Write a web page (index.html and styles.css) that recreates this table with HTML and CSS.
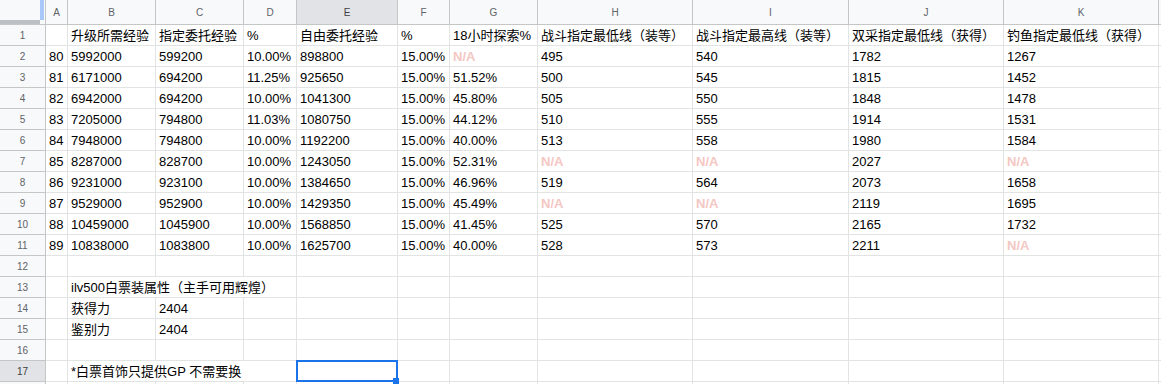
FILE: index.html
```html
<!DOCTYPE html>
<html lang="zh-CN">
<head>
<meta charset="utf-8">
<title>Sheet</title>
<link rel="stylesheet" href="styles.css">
</head>
<body>
<div class="sheet">
  <div class="row head">
    <div class="corner"><div class="corner-top"><span class="freeze-col"></span></div><div class="freeze-row"></div></div>
    <div class="ch">A</div><div class="ch">B</div><div class="ch">C</div><div class="ch">D</div><div class="ch active">E</div><div class="ch">F</div><div class="ch">G</div><div class="ch">H</div><div class="ch">I</div><div class="ch">J</div><div class="ch">K</div><div class="ch filler"></div>
  </div>
  <div class="row"><div class="rh">1</div><div class="c"></div><div class="c">升级所需经验</div><div class="c">指定委托经验</div><div class="c">%</div><div class="c">自由委托经验</div><div class="c">%</div><div class="c">18小时探索%</div><div class="c">战斗指定最低线（装等）</div><div class="c">战斗指定最高线（装等）</div><div class="c">双采指定最低线（获得）</div><div class="c">钓鱼指定最低线（获得）</div><div class="c"></div></div>
  <div class="row"><div class="rh">2</div><div class="c">80</div><div class="c">5992000</div><div class="c">599200</div><div class="c">10.00%</div><div class="c">898800</div><div class="c">15.00%</div><div class="c na">N/A</div><div class="c">495</div><div class="c">540</div><div class="c">1782</div><div class="c">1267</div><div class="c"></div></div>
  <div class="row"><div class="rh">3</div><div class="c">81</div><div class="c">6171000</div><div class="c">694200</div><div class="c">11.25%</div><div class="c">925650</div><div class="c">15.00%</div><div class="c">51.52%</div><div class="c">500</div><div class="c">545</div><div class="c">1815</div><div class="c">1452</div><div class="c"></div></div>
  <div class="row"><div class="rh">4</div><div class="c">82</div><div class="c">6942000</div><div class="c">694200</div><div class="c">10.00%</div><div class="c">1041300</div><div class="c">15.00%</div><div class="c">45.80%</div><div class="c">505</div><div class="c">550</div><div class="c">1848</div><div class="c">1478</div><div class="c"></div></div>
  <div class="row"><div class="rh">5</div><div class="c">83</div><div class="c">7205000</div><div class="c">794800</div><div class="c">11.03%</div><div class="c">1080750</div><div class="c">15.00%</div><div class="c">44.12%</div><div class="c">510</div><div class="c">555</div><div class="c">1914</div><div class="c">1531</div><div class="c"></div></div>
  <div class="row"><div class="rh">6</div><div class="c">84</div><div class="c">7948000</div><div class="c">794800</div><div class="c">10.00%</div><div class="c">1192200</div><div class="c">15.00%</div><div class="c">40.00%</div><div class="c">513</div><div class="c">558</div><div class="c">1980</div><div class="c">1584</div><div class="c"></div></div>
  <div class="row"><div class="rh">7</div><div class="c">85</div><div class="c">8287000</div><div class="c">828700</div><div class="c">10.00%</div><div class="c">1243050</div><div class="c">15.00%</div><div class="c">52.31%</div><div class="c na">N/A</div><div class="c na">N/A</div><div class="c">2027</div><div class="c na">N/A</div><div class="c"></div></div>
  <div class="row"><div class="rh">8</div><div class="c">86</div><div class="c">9231000</div><div class="c">923100</div><div class="c">10.00%</div><div class="c">1384650</div><div class="c">15.00%</div><div class="c">46.96%</div><div class="c">519</div><div class="c">564</div><div class="c">2073</div><div class="c">1658</div><div class="c"></div></div>
  <div class="row"><div class="rh">9</div><div class="c">87</div><div class="c">9529000</div><div class="c">952900</div><div class="c">10.00%</div><div class="c">1429350</div><div class="c">15.00%</div><div class="c">45.49%</div><div class="c na">N/A</div><div class="c na">N/A</div><div class="c">2119</div><div class="c">1695</div><div class="c"></div></div>
  <div class="row"><div class="rh">10</div><div class="c">88</div><div class="c">10459000</div><div class="c">1045900</div><div class="c">10.00%</div><div class="c">1568850</div><div class="c">15.00%</div><div class="c">41.45%</div><div class="c">525</div><div class="c">570</div><div class="c">2165</div><div class="c">1732</div><div class="c"></div></div>
  <div class="row"><div class="rh">11</div><div class="c">89</div><div class="c">10838000</div><div class="c">1083800</div><div class="c">10.00%</div><div class="c">1625700</div><div class="c">15.00%</div><div class="c">40.00%</div><div class="c">528</div><div class="c">573</div><div class="c">2211</div><div class="c na">N/A</div><div class="c"></div></div>
  <div class="row"><div class="rh">12</div><div class="c"></div><div class="c"></div><div class="c"></div><div class="c"></div><div class="c"></div><div class="c"></div><div class="c"></div><div class="c"></div><div class="c"></div><div class="c"></div><div class="c"></div><div class="c"></div></div>
  <div class="row"><div class="rh">13</div><div class="c"></div><div class="c span3">ilv500白票装属性（主手可用辉煌）</div><div class="c"></div><div class="c"></div><div class="c"></div><div class="c"></div><div class="c"></div><div class="c"></div><div class="c"></div><div class="c"></div></div>
  <div class="row"><div class="rh">14</div><div class="c"></div><div class="c">获得力</div><div class="c">2404</div><div class="c"></div><div class="c"></div><div class="c"></div><div class="c"></div><div class="c"></div><div class="c"></div><div class="c"></div><div class="c"></div><div class="c"></div></div>
  <div class="row"><div class="rh">15</div><div class="c"></div><div class="c">鉴别力</div><div class="c">2404</div><div class="c"></div><div class="c"></div><div class="c"></div><div class="c"></div><div class="c"></div><div class="c"></div><div class="c"></div><div class="c"></div><div class="c"></div></div>
  <div class="row"><div class="rh">16</div><div class="c"></div><div class="c"></div><div class="c"></div><div class="c"></div><div class="c"></div><div class="c"></div><div class="c"></div><div class="c"></div><div class="c"></div><div class="c"></div><div class="c"></div><div class="c"></div></div>
  <div class="row"><div class="rh active">17</div><div class="c"></div><div class="c span3">*白票首饰只提供GP 不需要换</div><div class="c sel"><span class="handle"></span></div><div class="c"></div><div class="c"></div><div class="c"></div><div class="c"></div><div class="c"></div><div class="c"></div><div class="c"></div></div>
  <div class="row"><div class="rh"></div><div class="c"></div><div class="c"></div><div class="c"></div><div class="c"></div><div class="c"></div><div class="c"></div><div class="c"></div><div class="c"></div><div class="c"></div><div class="c"></div><div class="c"></div><div class="c"></div></div>
</div>
</body>
</html>
```
FILE: styles.css
```css
html, body {
  margin: 0;
  padding: 0;
  background: #fff;
}
.sheet {
  width: 1161px;
  height: 384px;
  overflow: hidden;
  font-family: "Liberation Sans", "Noto Sans CJK SC", Arial, sans-serif;
  font-size: 13px;
  color: #000;
}
.row {
  display: grid;
  grid-template-columns: 46px 22px 88px 88px 53px 101px 52px 88px 155px 156px 155px 155px 2px;
  height: 21px;
}
.row.head {
  height: 25px;
  background: #f8f9fa;
}
.c {
  box-sizing: border-box;
  border-right: 1px solid #e2e3e3;
  border-bottom: 1px solid #e2e3e3;
  padding: 0 3px 1px;
  line-height: 17px;
  display: flex;
  align-items: flex-end;
  white-space: nowrap;
  overflow: hidden;
  min-width: 0;
}
.span3 {
  grid-column: span 3;
}
.na {
  color: #f4c7c3;
  font-weight: bold;
}
.rh {
  box-sizing: border-box;
  background: #f8f9fa;
  border-right: 1px solid #c4c7c5;
  border-bottom: 1px solid #c4c7c5;
  display: flex;
  align-items: center;
  justify-content: center;
  font-size: 10px;
  color: #5f6368;
}
.ch {
  box-sizing: border-box;
  border-right: 1px solid #c4c7c5;
  border-bottom: 1px solid #c4c7c5;
  display: flex;
  align-items: center;
  justify-content: center;
  font-size: 10px;
  color: #5f6368;
}
.ch.active, .rh.active {
  background: #e1e3e6;
  color: #3c4043;
}
.ch.filler {
  border-right: none;
}
.corner {
  box-sizing: border-box;
  border-right: 1px solid #c4c7c5;
  border-bottom: 1px solid #c4c7c5;
  padding-right: 1px;
  display: flex;
  flex-direction: column;
}
.corner-top {
  flex: 1;
  display: flex;
  justify-content: flex-end;
}
.freeze-col {
  width: 4px;
  background: #a8c7fa;
}
.freeze-row {
  height: 4px;
  width: 40px;
  background: #bdc1c6;
}
.sel {
  position: relative;
  overflow: visible;
}
.sel::after {
  content: "";
  position: absolute;
  left: -1px;
  top: -1px;
  right: -1px;
  bottom: -1px;
  border: 2px solid #1a73e8;
  z-index: 1;
}
.handle {
  position: absolute;
  right: -2px;
  bottom: -3px;
  width: 6px;
  height: 6px;
  background: #1a73e8;
  z-index: 2;
}
```
